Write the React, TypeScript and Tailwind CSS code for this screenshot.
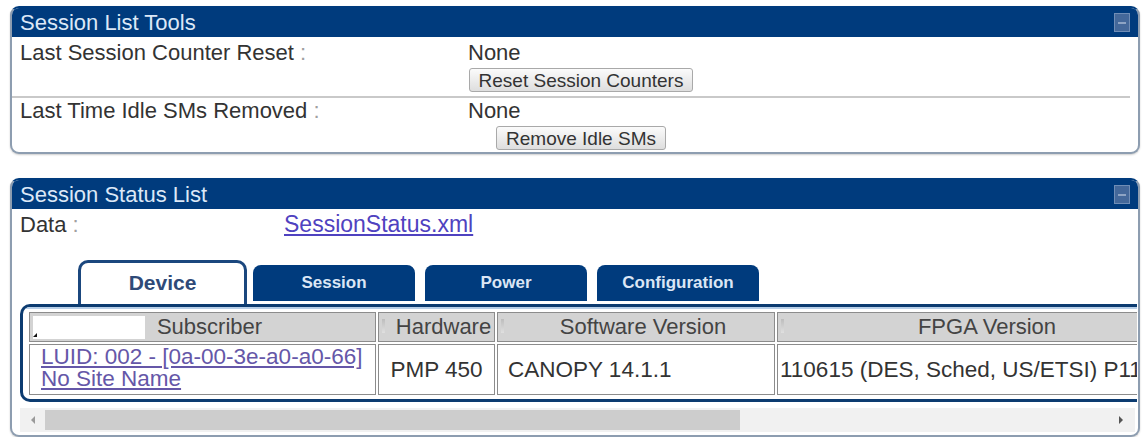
const FONT = { fontFamily: '"Liberation Sans", Arial, sans-serif' };

function MinIcon() {
  return (
    <div className="flex h-[19px] w-[16px] items-center justify-center border border-[#6f8db6] bg-[#44689a]">
      <div className="h-[2px] w-[8px] bg-[#8ea4c4]" />
    </div>
  );
}

function Panel({ title, children }: { title: string; children: React.ReactNode }) {
  return (
    <div className="overflow-hidden rounded-[9px] border-2 border-[#8d9db0] border-t-[#003b7d] bg-white shadow-[0_1px_2px_rgba(0,0,0,0.2)]">
      <div className="flex h-[29px] items-center justify-between bg-[#003b7d] pl-[8px] pr-[8px] text-[22px] leading-none text-[#dce8f7]">
        <span>{title}</span>
        <MinIcon />
      </div>
      {children}
    </div>
  );
}

function Btn({ children }: { children: React.ReactNode }) {
  return (
    <button className="h-[24px] rounded-[3px] border border-[#a9a9a9] bg-gradient-to-b from-[#fbfbfb] to-[#dedede] px-[9px] text-[19px] leading-none text-[#333]">
      {children}
    </button>
  );
}

function Label({ text }: { text: string }) {
  return (
    <>
      {text} <span className="text-[#a0a0a0]">:</span>
    </>
  );
}

function ToolRow({
  label,
  button,
  top,
  bottom,
}: {
  label: string;
  button: string;
  top: string;
  bottom: string;
}) {
  return (
    <div className={`flex pl-[8px] ${top} ${bottom}`}>
      <div className="w-[448px] leading-[25px]">
        <Label text={label} />
      </div>
      <div className="flex flex-col items-start">
        <div className="leading-[25px]">None</div>
        <div className="mt-[3px] flex w-[226px] justify-center">
          <Btn>{button}</Btn>
        </div>
      </div>
    </div>
  );
}

const tabs = [
  { name: "Session", gap: "ml-[6px]" },
  { name: "Power", gap: "ml-[10px]" },
  { name: "Configuration", gap: "ml-[10px]" },
];

const columns = [
  { name: "Subscriber", w: "w-[347px]" },
  { name: "Hardware", w: "w-[117px]" },
  { name: "Software Version", w: "w-[278px]" },
  { name: "FPGA Version", w: "w-[406px]" },
];

function HeaderCell({ name, w, first }: { name: string; w: string; first: boolean }) {
  return (
    <div
      className={`relative flex h-[30px] shrink-0 items-center justify-center border border-[#8c8c8c] bg-[#d3d3d3] pl-[14px] text-[22px] leading-none text-[#444] ${w}`}
    >
      {first ? (
        <>
          <div className="absolute left-[3px] top-[3px] h-[23px] w-[112px] bg-white" />
          <div className="absolute left-[3px] top-[20px] h-0 w-0 rotate-90 border-l-[4px] border-t-[4px] border-l-transparent border-t-[#111]" />
        </>
      ) : (
        <div className="absolute left-[3px] top-[6px] h-[14px] w-[3px] bg-gradient-to-b from-[#bdbdbd] to-[#e0e0e0]" />
      )}
      <span className="relative">{name}</span>
    </div>
  );
}

export default function App() {
  return (
    <div className="h-[437px] w-[1146px] overflow-hidden bg-white pl-[10px] pr-[6px] pt-[6px] text-[22px] text-[#333]" style={FONT}>
      <Panel title="Session List Tools">
        <ToolRow label="Last Session Counter Reset" button="Reset Session Counters" top="pt-[3px]" bottom="pb-[4px]" />
        <div className="mr-[8px] h-[2px] bg-[#c9c9c9]" />
        <ToolRow label="Last Time Idle SMs Removed" button="Remove Idle SMs" top="pt-0" bottom="pb-[2px]" />
      </Panel>

      <div className="mt-[24px]">
        <Panel title="Session Status List">
          <div className="flex pl-[8px] pt-[3px] leading-[25px]">
            <div className="w-[264px]">
              <Label text="Data" />
            </div>
            <a href="#" className="text-[23px] text-[#4f42c0] underline">
              SessionStatus.xml
            </a>
          </div>

          <div className="ml-[66px] mt-[23px] flex h-[44px] items-end">
            <div className="flex h-[44px] w-[169px] items-center justify-center rounded-t-[10px] border-[3px] border-b-0 border-[#1b477e] bg-white pb-[2px] text-[21px] font-bold text-[#2f4a78]">
              Device
            </div>
            {tabs.map((t) => (
              <div
                key={t.name}
                className={`mb-[3px] flex h-[36px] w-[162px] items-center justify-center rounded-t-[8px] bg-[#003b7d] text-[17px] font-bold text-[#dbe6f5] ${t.gap}`}
              >
                {t.name}
              </div>
            ))}
          </div>

          <div className="ml-[8px] mr-[1px] overflow-hidden rounded-l-[10px] border-[3px] border-r-0 border-[#0c3b70] bg-white">
            <div className="border-t-2 border-[#b8cfe8] pb-[4px] pl-[6px] pt-[3px]">
              <div className="flex w-max gap-[2px]">
                {columns.map((c, i) => (
                  <HeaderCell key={c.name} name={c.name} w={c.w} first={i === 0} />
                ))}
              </div>
              <div className="mt-[2px] flex w-max gap-[2px] text-[22.5px]">
                <div className="h-[51px] w-[347px] shrink-0 border border-[#8c8c8c] pl-[11px] pt-[1px] leading-[22px]">
                  <a href="#" className="text-[#6557a8] underline">
                    LUID: 002 - [0a-00-3e-a0-a0-66]
                  </a>
                  <br />
                  <a href="#" className="text-[#6557a8] underline">
                    No Site Name
                  </a>
                </div>
                <div className="flex h-[51px] w-[117px] shrink-0 items-center justify-center border border-[#8c8c8c]">
                  PMP 450
                </div>
                <div className="flex h-[51px] w-[278px] shrink-0 items-center border border-[#8c8c8c] pl-[10px]">
                  CANOPY 14.1.1
                </div>
                <div className="flex h-[51px] w-[406px] shrink-0 items-center whitespace-nowrap border border-[#8c8c8c] pl-[2px]">
                  110615 (DES, Sched, US/ETSI) P11
                </div>
              </div>
            </div>
          </div>

          <div className="mb-[3px] ml-[8px] mr-[3px] mt-[6px] flex h-[24px] items-center bg-[#f1f1f1]">
            <div className="flex w-[25px] justify-center">
              <div className="h-0 w-0 border-y-[4px] border-r-[4px] border-y-transparent border-r-[#9a9a9a]" />
            </div>
            <div className="h-[20px] w-[695px] bg-[#cdcdcd]" />
            <div className="flex-1" />
            <div className="mr-[12px] h-0 w-0 border-y-[4px] border-l-[4px] border-y-transparent border-l-[#555]" />
          </div>
        </Panel>
      </div>
    </div>
  );
}
